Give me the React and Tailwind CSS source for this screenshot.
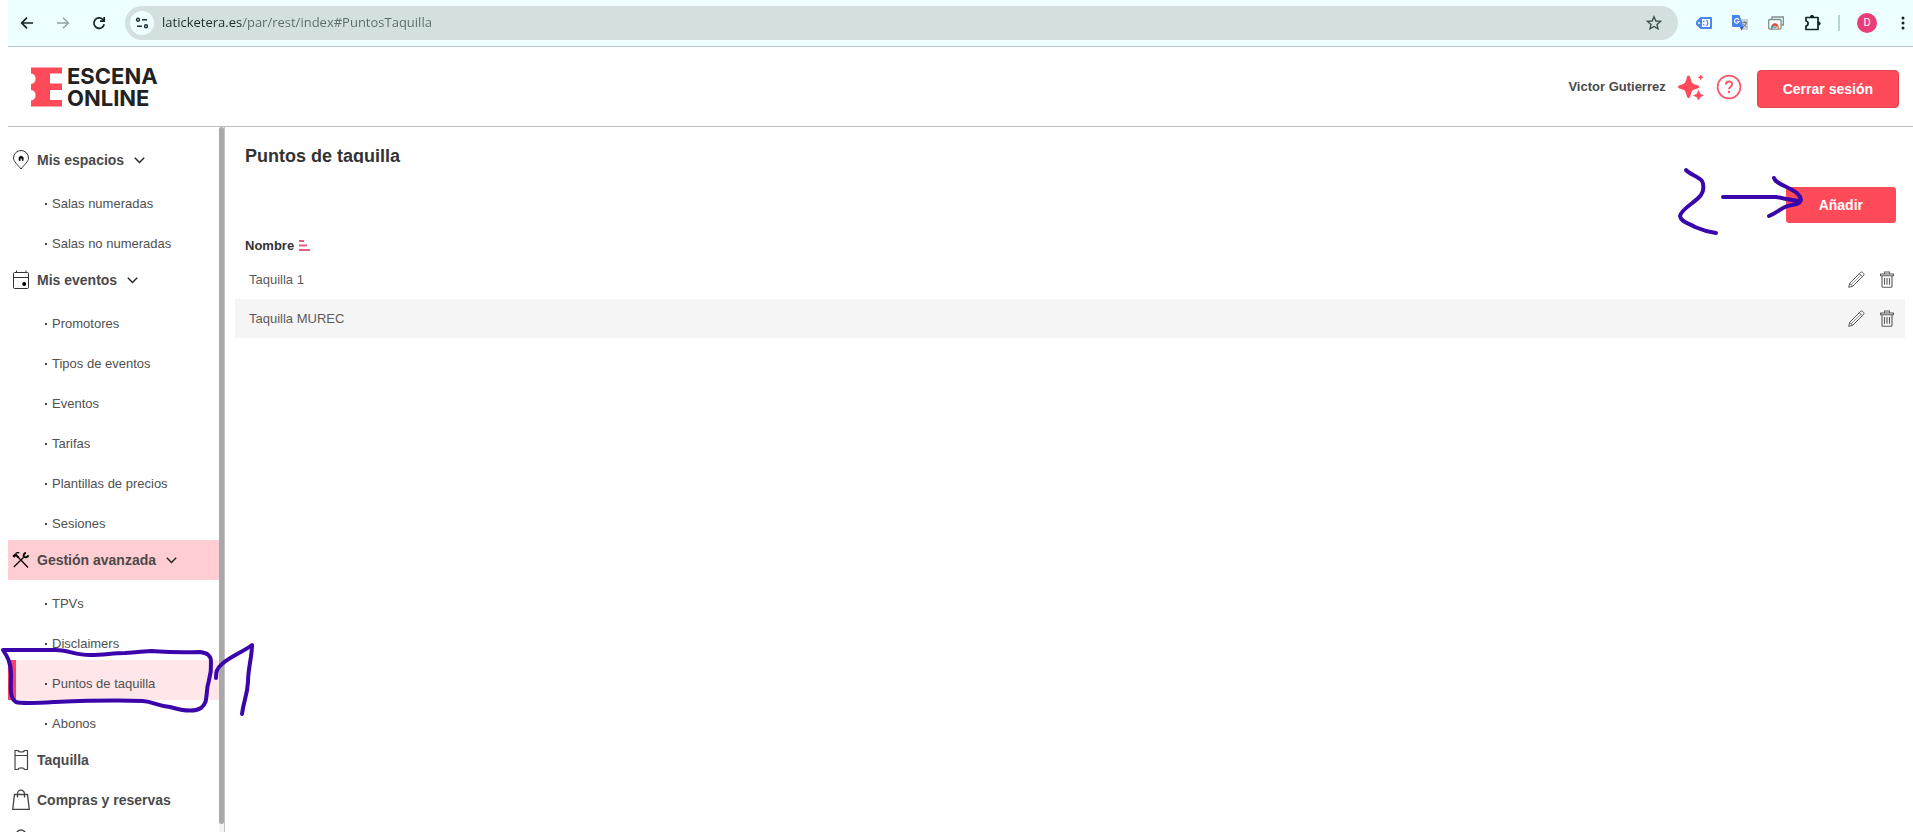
import React from "react";

const menu = [
  {
    label: "Mis espacios",
    icon: "pin",
    open: true,
    children: ["Salas numeradas", "Salas no numeradas"],
  },
  {
    label: "Mis eventos",
    icon: "calendar",
    open: true,
    children: ["Promotores", "Tipos de eventos", "Eventos", "Tarifas", "Plantillas de precios", "Sesiones"],
  },
  {
    label: "Gestión avanzada",
    icon: "tools",
    open: true,
    active: true,
    children: ["TPVs", "Disclaimers", "Puntos de taquilla", "Abonos"],
  },
  { label: "Taquilla", icon: "ticket" },
  { label: "Compras y reservas", icon: "bag" },
  { label: "", icon: "user" },
];

function MenuIcon({ name }) {
  const p = { width: 18, height: 22, viewBox: "0 0 18 22", fill: "none", stroke: "#333", strokeWidth: 1, className: "shrink-0", "aria-hidden": true };
  if (name === "pin")
    return (
      <svg {...p}>
        <path d="M9 20C5.500 15.500 1.500 12.500 1.500 9A7.500 7.500 0 0 1 16.500 9C16.500 12.500 12.500 15.500 9 20Z" />
        <path d="M7 11.500V8.300L9 7L11.200 8.300V11.500H10.200V9.300H8.200V11.500Z" fill="#000" stroke="#000" strokeWidth=".6" />
      </svg>
    );
  if (name === "calendar")
    return (
      <svg {...p}>
        <rect x="1.500" y="3.500" width="15" height="16" rx="1" />
        <path d="M1.500 8.500H16.500M4.500 1.500V3.500M14 1.500V3.500" />
        <circle cx="12.200" cy="15" r="2" fill="#000" stroke="none" />
      </svg>
    );
  if (name === "tools")
    return (
      <svg {...p} stroke="#000">
        <path d="M1.800 18L11.500 8.500M5.500 7.500L16 18.500" strokeWidth="1.200" />
        <path d="M1.300 7.800L3.800 5.300" strokeWidth="2.600" />
        <path d="M3.500 5.500L6.500 8.500" strokeWidth="1.800" />
        <path d="M3.500 4.400C4.800 3.400 6.200 3.400 7.300 3.800" strokeWidth="1.300" />
        <path d="M14 4C12 4.200 11.300 5.700 11.800 7.700C13.500 8.900 15.800 8.300 16.300 6.300" strokeWidth="1.900" />
      </svg>
    );
  if (name === "ticket")
    return (
      <svg {...p} stroke="#444">
        <path d="M3 1.500H6C6.500 3.500 12 3.500 12.500 1.500H15.500V20.500H12.500C12 18.200 6.500 18.200 6 20.500H3Z" strokeWidth="1.200" />
        <path d="M3 6.500H15.500" />
      </svg>
    );
  if (name === "bag")
    return (
      <svg {...p} stroke="#444" strokeWidth="1.300">
        <path d="M2.500 5.500H15.500L17.300 20.300H.700Z" />
        <path d="M5.500 8.500V5A3.500 3.800 0 0 1 12.500 5V8.500" />
      </svg>
    );
  return (
    <svg {...p} stroke="#444" strokeWidth="1.300">
      <circle cx="9" cy="6" r="5" />
      <path d="M1 20C2 14 16 14 17 20" />
    </svg>
  );
}

function Chevron() {
  return (
    <svg width="11" height="7" viewBox="0 0 11 7" fill="none" stroke="#222" strokeWidth="1.400" aria-hidden="true">
      <path d="M.800 .800L5.500 5.600L10.200 .800" />
    </svg>
  );
}

function BrowserBar() {
  return (
    <div className="flex h-[47px] shrink-0 items-center border-b border-[#b3c8cc] bg-[#edffff] pr-1 pl-[9px]">
      <nav className="flex shrink-0 items-center gap-4" aria-label="Navegador">
        <button aria-label="Atrás" className="flex size-5 items-center justify-center">
          <svg width="14" height="14" viewBox="0 0 14 14" fill="none" stroke="#0f2527" strokeWidth="1.700"><path d="M13 7H2M7 1.700L1.700 7L7 12.300" /></svg>
        </button>
        <button aria-label="Adelante" className="flex size-5 items-center justify-center">
          <svg width="14" height="14" viewBox="0 0 14 14" fill="none" stroke="#91a3a4" strokeWidth="1.500"><path d="M1 7H12M7 1.700L12.300 7L7 12.300" /></svg>
        </button>
        <button aria-label="Recargar" className="flex size-5 items-center justify-center">
          <svg width="14" height="14" viewBox="0 0 14 14" fill="none" stroke="#0f2527" strokeWidth="1.700"><path d="M12.200 8.200A5.200 5.200 0 1 1 10.800 3.400L12 4.600" /><path d="M12.200 1V5.200H8" /></svg>
        </button>
      </nav>
      <div className="ml-4 flex h-[34px] min-w-0 flex-1 items-center rounded-full bg-[#d3e0df] pr-4 pl-[5px]">
        <button aria-label="Información del sitio" className="flex size-6 shrink-0 items-center justify-center rounded-full bg-[#f0ffff]">
          <svg width="14" height="12" viewBox="0 0 14 12" fill="none" stroke="#1e3234" strokeWidth="1.400"><circle cx="3" cy="2.800" r="1.500" /><path d="M7 2.800H12M2 9.200H7" /><circle cx="11" cy="9.200" r="1.500" /></svg>
        </button>
        <input
          aria-label="Dirección"
          defaultValue="laticketera.es/par/rest/index#PuntosTaquilla"
          className="ml-2 min-w-0 flex-1 bg-[linear-gradient(to_right,#1c2b2c_80px,#5b6a6b_80px)] bg-clip-text font-['Open_Sans',sans-serif] text-[13px] text-transparent outline-none"
        />
        <button aria-label="Marcador" className="shrink-0">
          <svg width="16" height="16" viewBox="0 0 16 16" fill="none" stroke="#414f50" strokeWidth="1.400"><path d="M8 1.800L9.900 6L14.400 6.400L11 9.400L12 13.900L8 11.500L4 13.900L5 9.400L1.600 6.400L6.100 6Z" /></svg>
        </button>
      </div>
      <div className="ml-[18px] flex shrink-0 items-center gap-5">
        <svg width="16" height="16" viewBox="0 0 16 16" aria-hidden="true">
          <path d="M4.500 2H15A1 1 0 0 1 16 3V13A1 1 0 0 1 15 14H4.500L0 9.500V6.500Z" fill="#4a86ee" />
          <path d="M6 4H14V12H6Z" fill="#fff" />
          <path d="M7.800 5.500V7.200M7.800 8.800V10.500M10.500 5C12 6.500 12 9.500 10.500 11" stroke="#4a86ee" strokeWidth="1.300" fill="none" />
          <circle cx="3" cy="8" r="1" fill="#fff" />
        </svg>
        <svg width="16" height="16" viewBox="0 0 16 16" aria-hidden="true">
          <path d="M6 4H16V15H9Z" fill="#c9d0d6" />
          <path d="M0 0H7.500L11.500 12H1.200A1.200 1.200 0 0 1 0 10.800Z" fill="#4b83ee" />
          <path d="M8 12H11.500L9.300 15.500Z" fill="#2c54b5" />
          <path d="M6.900 4.900A2.300 2.300 0 1 0 7 6.500H5" stroke="#fff" strokeWidth="1.200" fill="none" />
          <path d="M10.500 7.500H15M12.700 6.500V7.500M14.200 7.500C13.800 9.500 12.500 11 11 12M11.500 9C12.200 10.500 13.500 11.500 14.500 12" stroke="#6c7a83" fill="none" />
        </svg>
        <svg width="16" height="16" viewBox="0 0 16 16" fill="none" aria-hidden="true">
          <path d="M4 4V2H15.300V10H13.300" stroke="#858d8e" strokeWidth="1.300" />
          <rect x=".700" y="4.500" width="12.300" height="9.500" rx="1" fill="#f5ffff" stroke="#858d8e" strokeWidth="1.300" />
          <path d="M3 13.300A4 5 0 0 1 11 13.300Z" fill="#e24b3d" />
          <path d="M3 13.300L4 10.300L6.500 13.300Z" fill="#2ba24c" />
          <path d="M8 13.300L10.300 10.500L11 13.300Z" fill="#f5bf31" />
          <path d="M5 13.300A2 2 0 0 1 9 13.300Z" fill="#3f7fee" stroke="#fff" strokeWidth=".6" />
        </svg>
        <button aria-label="Extensiones">
          <svg width="18" height="18" viewBox="0 0 18 18" fill="none" stroke="#0f2527" strokeWidth="1.700" strokeLinejoin="round"><path d="M2 3.500H14V15.500H2V12C4.800 11.500 4.800 7.500 2 7Z" /><path d="M6.300 3A1.700 1.700 0 0 1 9.700 3ZM14.500 7.800A1.700 1.700 0 0 1 14.500 11.200Z" fill="#0f2527" strokeWidth="1" /></svg>
        </button>
      </div>
      <div className="mr-[17px] ml-4 h-4 w-0.5 shrink-0 bg-[#b7d3d6]" />
      <button aria-label="Perfil" className="flex size-5 shrink-0 items-center justify-center rounded-full bg-[#ea3d77] font-[Roboto,sans-serif] text-[11px] text-white">D</button>
      <button aria-label="Más opciones" className="ml-5 flex w-3 shrink-0 justify-center">
        <svg width="4" height="14" viewBox="0 0 4 14" fill="#0f2527"><circle cx="2" cy="2" r="1.500" /><circle cx="2" cy="7" r="1.500" /><circle cx="2" cy="12" r="1.500" /></svg>
      </button>
    </div>
  );
}

function Header() {
  return (
    <header className="flex h-20 shrink-0 items-center border-b border-[#bdbdbd] pr-3.5 pl-[23px]">
      <a href="#inicio" className="flex items-center gap-[5px]" aria-label="Escena Online">
        <svg width="31" height="40" viewBox="0 0 31 40" fill="#ff4a5a" aria-hidden="true">
          <path d="M0 .500H31V6.500H19V16.500H31V23H19V33H31V39.500H0V33.500A5.300 5.300 0 0 0 0 23V17A5.300 5.300 0 0 0 0 6.500Z" />
        </svg>
        <span className="font-[Inter,sans-serif] text-[22px] leading-[22px] font-bold text-[#222]">
          ESCENA
          <br />
          ONLINE
        </span>
      </a>
      <div className="ml-auto flex items-center">
        <span className="text-[13px] font-bold text-[#4a4a4a]">Victor Gutierrez</span>
        <svg className="ml-3" width="26" height="26" viewBox="0 0 26 26" fill="#ff4a5a" aria-hidden="true">
          <path d="M10.500 1.500C11.800 1.500 12.200 3 12.800 5.500C13.800 9 14.700 9.900 18 10.700C20.500 11.300 21.300 11.800 21.300 12.800C21.300 13.800 20.500 14.300 18 14.900C14.700 15.700 13.800 16.600 12.800 20.200C12.200 22.800 11.800 24 10.500 24C9.200 24 8.900 22.800 8.300 20.200C7.300 16.600 6.300 15.700 3 14.900C.600 14.300 0 13.800 0 12.800C0 11.800 .600 11.300 3 10.700C6.300 9.900 7.300 9 8.300 5.500C8.900 3 9.200 1.500 10.500 1.500Z" />
          <path d="M20.500 16.500L22 20L25.500 21.500L22 23L20.500 26L19 23L15.500 21.500L19 20Z" stroke="#ff4a5a" strokeWidth=".6" />
          <path d="M22.700 .500L23.700 2.400L25.700 3.300L23.700 4.300L22.700 6.300L21.700 4.300L19.700 3.300L21.700 2.400Z" />
        </svg>
        <button aria-label="Ayuda" className="ml-3">
          <svg width="26" height="26" viewBox="0 0 26 26" fill="none" stroke="#f4566a" strokeWidth="1.700"><circle cx="13" cy="13" r="11.400" /><path d="M9.900 10.600C9.900 6.500 16.200 6.600 16.200 10.200C16.200 12.600 13 12.400 13 15.200" strokeWidth="1.900" /><circle cx="13" cy="18" r="1.200" fill="#f4566a" stroke="none" /></svg>
        </button>
        <button className="mt-1 ml-[15px] h-[38px] rounded-[4px] border border-[#e04453] bg-[#ff4a5a] px-[25px] text-sm font-bold whitespace-nowrap text-white">Cerrar sesión</button>
      </div>
    </header>
  );
}

function Sidebar() {
  return (
    <aside className="flex w-[217px] shrink-0 border-r border-[#c4c4c4]">
      <nav className="min-w-0 flex-1 overflow-hidden pt-[13px]" aria-label="Principal">
        <ul>
          {menu.map((group) => (
            <li key={group.icon}>
              <button
                aria-expanded={group.open ? true : undefined}
                className={`flex h-10 w-full items-center pl-1 text-sm font-bold text-[#4a4a4a] ${group.active ? "bg-[#ffcdd2]" : ""}`}
              >
                <MenuIcon name={group.icon} />
                <span className="mr-2.5 ml-[7px]">{group.label}</span>
                {group.open && <Chevron />}
              </button>
              {group.children && (
                <ul>
                  {group.children.map((item) => (
                    <li key={item}>
                      <a
                        href={"#" + item.replaceAll(" ", "")}
                        className={`flex h-10 items-center border-l-8 pt-2 pl-[29px] text-[13px] text-[#505050] ${item === "Puntos de taquilla" ? "border-[#f9426a] bg-[#ffe6e9]" : "border-transparent"}`}
                      >
                        <span className="mr-[5px] size-0.5 bg-[#444]" />
                        {item}
                      </a>
                    </li>
                  ))}
                </ul>
              )}
            </li>
          ))}
        </ul>
      </nav>
      <div className="w-[5px] shrink-0 bg-[#f4f4f4] pb-2" aria-hidden="true">
        <div className="h-full rounded-full bg-[#a9a9a9]" />
      </div>
    </aside>
  );
}

function RowActions() {
  return (
    <div className="flex items-center justify-end gap-[15px]">
      <button aria-label="Editar">
        <svg className="block" width="17" height="17" viewBox="0 0 17 17" fill="none" stroke="#5a5a5a" strokeWidth="1"><path d="M.700 16.300L1.700 12.300L12.800 1.200C14 .200 16.800 3 15.800 4.200L4.700 15.300ZM1.700 12.300L4.700 15.300M11.300 2.700L14.300 5.700" /><path d="M3.600 13.400L12.700 4.300" strokeWidth=".6" /></svg>
      </button>
      <button aria-label="Eliminar">
        <svg className="block" width="14" height="17" viewBox="0 0 14 17" fill="none" stroke="#5a5a5a" strokeWidth="1.100"><path d="M.600 3H13.400V4.800H.600ZM4.500 3V1H9.500V3M2 4.800V15.200Q2 16.200 3 16.200H11Q12 16.200 12 15.200V4.800M4.500 7V13.800M7 7V13.800M9.500 7V13.800" /></svg>
      </button>
    </div>
  );
}

function Main() {
  return (
    <main className="min-w-0 flex-1 pt-[17px] pr-2 pl-2.5">
      <h1 className="h-[19px] overflow-hidden pl-2.5 text-lg leading-6 font-bold text-[#333]">Puntos de taquilla</h1>
      <div className="mt-6 flex justify-end pr-[9px]">
        <button className="h-9 rounded-[3px] bg-[#ff4a5a] px-[33px] text-sm font-bold text-white">Añadir</button>
      </div>
      <table className="mt-2 w-full border-collapse text-[13px]">
        <thead>
          <tr className="h-[29px]">
            <th scope="col" className="pl-2.5 text-left font-bold text-[#333]">
              <button className="flex items-center gap-[5px]">
                Nombre
                <svg width="11" height="11" viewBox="0 0 11 11" fill="#e85d80" aria-hidden="true"><path d="M0 0H5V2H0ZM0 4.500H8V6.500H0ZM0 9H11V11H0Z" /></svg>
              </button>
            </th>
            <th scope="col" aria-label="Acciones" />
          </tr>
        </thead>
        <tbody className="text-[#5c5c5c]">
          {["Taquilla 1", "Taquilla MUREC"].map((name) => (
            <tr key={name} className="h-[39px] even:bg-[#f5f5f5]">
              <td className="pl-3.5">{name}</td>
              <td className="pr-[11px]"><RowActions /></td>
            </tr>
          ))}
        </tbody>
      </table>
    </main>
  );
}

function Annotations() {
  return (
    <>
      <svg className="pointer-events-none absolute top-[640px] left-0" width="260" height="80" viewBox="0 640 260 80" fill="none" stroke="#3b05ac" strokeWidth="4" strokeLinecap="round" strokeLinejoin="round" aria-hidden="true">
        <path d="M3 650C18 650 40 650 55 650C68 650 75 655 90 655C105 655 112 653 125 653C140 652 146 651 152 651C165 652 175 653 200 652C207 653 211 655 211 662C212 678 207 682 207 691C206 701 206 704 201 708C193 713 180 710 170 707C155 705 154 702 143 701C115 700 80 701 55 702C38 703 22 704 16 702C9 698 11 686 11 675C11 662 7 656 3 650" />
        <path d="M216 678C216 673 216 669 222 664C231 656 243 652 252 645C252 657 248 668 248 682C247 697 244 699 242 714" />
      </svg>
      <svg className="pointer-events-none absolute top-[160px] right-[103px]" width="140" height="80" viewBox="1670 160 140 80" fill="none" stroke="#3b05ac" strokeWidth="4" strokeLinecap="round" strokeLinejoin="round" aria-hidden="true">
        <path d="M1686 170C1689 174 1698 176 1702 181C1704 184 1704 191 1701 195C1696 202 1681 209 1680 216C1681 222 1688 223 1695 227C1704 231 1709 232 1716 233" />
        <path d="M1723 197H1776C1783 198 1789 200 1800 201" />
        <path d="M1774 178C1776 186 1799 188 1801 200C1799 206 1791 204 1785 207C1779 210 1776 213 1769 216" />
      </svg>
    </>
  );
}

export default function App() {
  return (
    <div className="relative flex h-screen flex-col overflow-hidden bg-white pl-2 font-['Liberation_Sans',Arial,sans-serif]">
      <BrowserBar />
      <Header />
      <div className="flex min-h-0 flex-1">
        <Sidebar />
        <Main />
      </div>
      <Annotations />
    </div>
  );
}
